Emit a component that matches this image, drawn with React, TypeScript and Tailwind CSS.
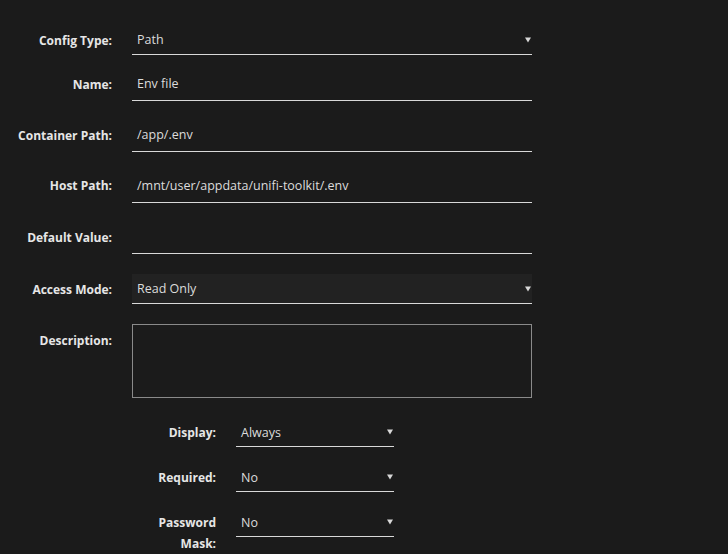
import React from "react";

const font = { fontFamily: '"Open Sans", "Noto Sans", "Liberation Sans", sans-serif' };

function Arrow() {
  return (
    <svg className="absolute right-[1px] top-[12px]" width="6" height="6" viewBox="0 0 6 6">
      <polygon points="0,0.5 6,0.5 3,5.5" fill="#d8d8d8" />
    </svg>
  );
}

function Field({
  value,
  select,
  bg,
  w = "w-[400px]",
  tall,
  sub,
}: {
  value: string;
  select?: boolean;
  bg?: boolean;
  w?: string;
  tall?: boolean;
  sub?: boolean;
}) {
  const size = tall ? "h-[31px] leading-[28px]" : sub ? "h-[30px] leading-[31px]" : "h-[30px] leading-[29px]";
  return (
    <div
      className={`relative ${w} ${size} border-b border-[#d9d9d9] pl-[5px] text-[12.5px] text-[#dcdcdc] ${
        bg ? "bg-[#222222]" : ""
      }`}
    >
      {value}
      {select && <Arrow />}
    </div>
  );
}

function Row({
  label,
  children,
  mt,
  pt = "pt-[5px]",
}: {
  label: string;
  children: React.ReactNode;
  mt: string;
  pt?: string;
}) {
  return (
    <div className={`flex items-start gap-[20px] ${mt}`}>
      <div className={`w-[112px] shrink-0 ${pt} text-right text-[12px] font-bold leading-[21px] text-[#e6e6e6]`}>
        {label}
      </div>
      {children}
    </div>
  );
}

function SubRow({ label, value, mt }: { label: React.ReactNode; value: string; mt: string }) {
  return (
    <div className={`flex items-start gap-[20px] pl-[132px] ${mt}`}>
      <div className="w-[84px] shrink-0 pt-[5px] text-right text-[12px] font-bold leading-[21px] text-[#e6e6e6]">
        {label}
      </div>
      <Field value={value} select sub w="w-[158px]" />
    </div>
  );
}

export default function App() {
  return (
    <div className="w-[728px] h-[554px] overflow-hidden bg-[#1b1b1b] pt-[25px]" style={font}>
      <Row label="Config Type:" mt="mt-0">
        <Field value="Path" select />
      </Row>
      <Row label="Name:" mt="mt-[15px]" pt="pt-[4px]">
        <Field value="Env file" tall />
      </Row>
      <Row label="Container Path:" mt="mt-[20px]" pt="pt-[4px]">
        <Field value="/app/.env" tall />
      </Row>
      <Row label="Host Path:" mt="mt-[20px]" pt="pt-[3px]">
        <Field value="/mnt/user/appdata/unifi-toolkit/.env" tall />
      </Row>
      <Row label="Default Value:" mt="mt-[20px]" pt="pt-[4px]">
        <Field value="" tall />
      </Row>
      <Row label="Access Mode:" mt="mt-[20px]">
        <Field value="Read Only" select bg />
      </Row>
      <Row label="Description:" mt="mt-[20px]" pt="pt-[6px]">
        <div className="w-[400px] h-[74px] border border-[#8a8a8a] bg-[#1b1b1b]" />
      </Row>
      <SubRow label="Display:" value="Always" mt="mt-[19px]" />
      <SubRow label="Required:" value="No" mt="mt-[15px]" />
      <SubRow
        label={
          <>
            Password
            <br />
            Mask:
          </>
        }
        value="No"
        mt="mt-[15px]"
      />
    </div>
  );
}
